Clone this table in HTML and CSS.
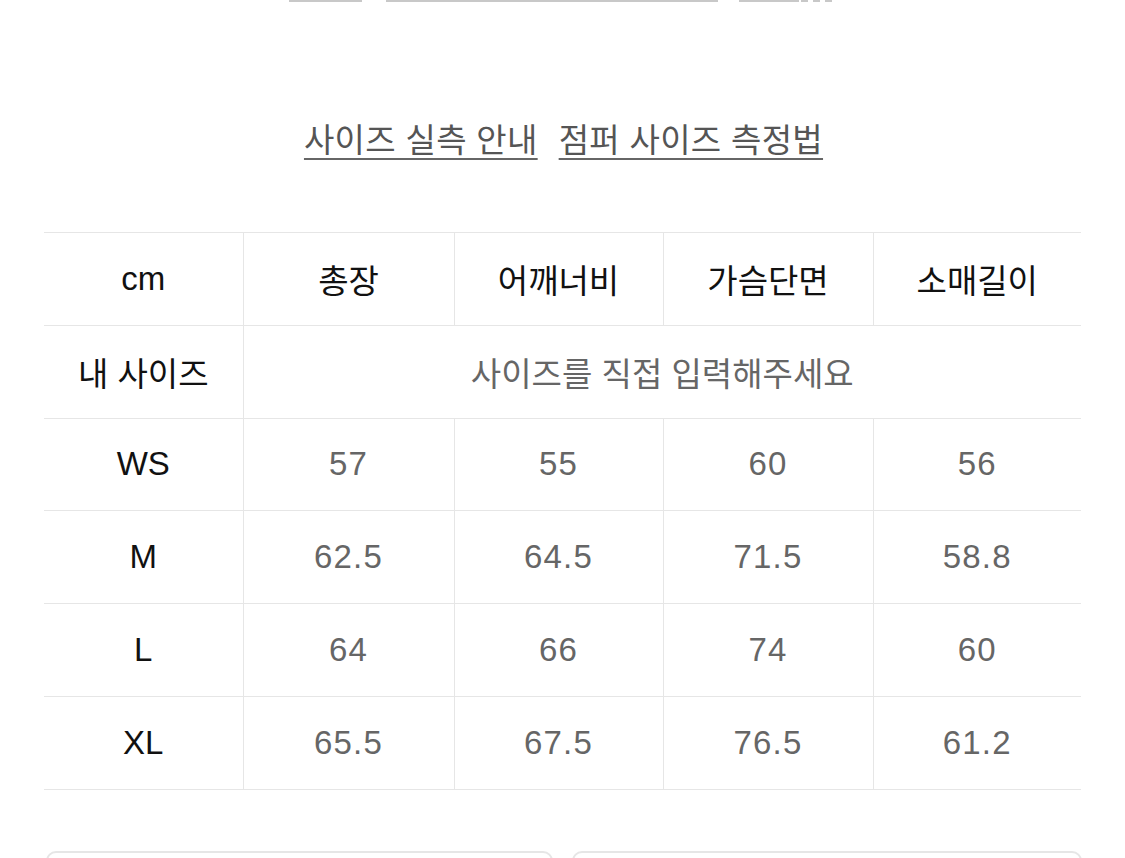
FILE: index.html
```html
<!DOCTYPE html>
<html lang="ko">
<head>
<meta charset="utf-8">
<link rel="stylesheet" href="styles.css">
</head>
<body>
<div class="top-bars">
  <span class="bar bar1"></span>
  <span class="bar bar2"></span>
  <span class="bar bar3"></span>
  <span class="dots"><i></i><i></i><i></i></span>
</div>
<nav class="links">
  <a class="link">사이즈 실측 안내</a>
  <a class="link">점퍼 사이즈 측정법</a>
</nav>
<table class="size-table">
  <colgroup>
    <col class="c0"><col class="c1"><col class="c2"><col class="c3"><col class="c4">
  </colgroup>
  <tr class="row">
    <th class="label">cm</th>
    <th class="head">총장</th>
    <th class="head">어깨너비</th>
    <th class="head">가슴단면</th>
    <th class="head">소매길이</th>
  </tr>
  <tr class="row">
    <th class="label ko">내 사이즈</th>
    <td class="input" colspan="4">사이즈를 직접 입력해주세요</td>
  </tr>
  <tr class="row">
    <th class="label">WS</th>
    <td class="val">57</td><td class="val">55</td><td class="val">60</td><td class="val">56</td>
  </tr>
  <tr class="row">
    <th class="label">M</th>
    <td class="val">62.5</td><td class="val">64.5</td><td class="val">71.5</td><td class="val">58.8</td>
  </tr>
  <tr class="row">
    <th class="label">L</th>
    <td class="val">64</td><td class="val">66</td><td class="val">74</td><td class="val">60</td>
  </tr>
  <tr class="row">
    <th class="label">XL</th>
    <td class="val">65.5</td><td class="val">67.5</td><td class="val">76.5</td><td class="val">61.2</td>
  </tr>
</table>
<div class="buttons">
  <div class="btn"></div>
  <div class="btn"></div>
</div>
</body>
</html>
```
FILE: styles.css
```css
* { box-sizing: border-box; }
html, body { margin: 0; padding: 0; background: #fff; }
body {
  width: 1125px;
  height: 858px;
  overflow: hidden;
  font-family: "Liberation Sans", "Noto Sans CJK KR", sans-serif;
}
.top-bars {
  display: flex;
  height: 3px;
  padding-left: 289px;
  align-items: flex-start;
}
.bar { display: block; height: 2px; background: #c8c8c8; }
.bar1 { width: 73px; }
.bar2 { width: 332px; margin-left: 24px; }
.bar3 { width: 60px; margin-left: 21px; }
.dots { display: flex; gap: 5px; margin-left: 2px; }
.dots i { display: block; width: 7px; height: 2px; background: #c8c8c8; }

.links {
  display: flex;
  justify-content: center;
  gap: 21px;
  margin-top: 113px;
  height: 116px;
  padding-left: 2px;
}
.link {
  font-family: "Noto Sans CJK KR", sans-serif;
  font-size: 33px;
  line-height: 44px;
  color: #555;
  text-decoration: underline;
  text-decoration-thickness: 2px;
  text-underline-offset: 6px;
  text-decoration-color: #666;
  letter-spacing: 0.3px;
}
.size-table {
  margin-left: 44px;
  width: 1037px;
  border-collapse: collapse;
  table-layout: fixed;
}
.c0 { width: 199px; }
.c1 { width: 211px; }
.c2 { width: 209px; }
.c3 { width: 210px; }
.c4 { width: 208px; }
.row { height: 92.8px; }
.size-table th, .size-table td {
  border-top: 1px solid #e6e6e6;
  border-bottom: 1px solid #e6e6e6;
  border-left: 1px solid #e6e6e6;
  text-align: center;
  vertical-align: middle;
  padding: 0;
  font-size: 33px;
  font-weight: normal;
}
.size-table th.label { border-left: none; color: #111; }
.size-table th.head { color: #111; font-family: "Noto Sans CJK KR", sans-serif; }
.size-table th.ko { font-family: "Noto Sans CJK KR", sans-serif; }
.size-table td.input { color: #666; font-family: "Noto Sans CJK KR", sans-serif; }
.size-table td.val {
  color: #666;
  font-family: "Liberation Sans", sans-serif;
  letter-spacing: 1.2px;
}

.buttons {
  display: flex;
  gap: 19px;
  margin-top: 61px;
  padding-left: 46px;
}
.btn {
  width: 507px;
  height: 60px;
  border: 2px solid #e6e6e6;
  border-radius: 10px;
}
.btn + .btn { width: 510px; }
```
